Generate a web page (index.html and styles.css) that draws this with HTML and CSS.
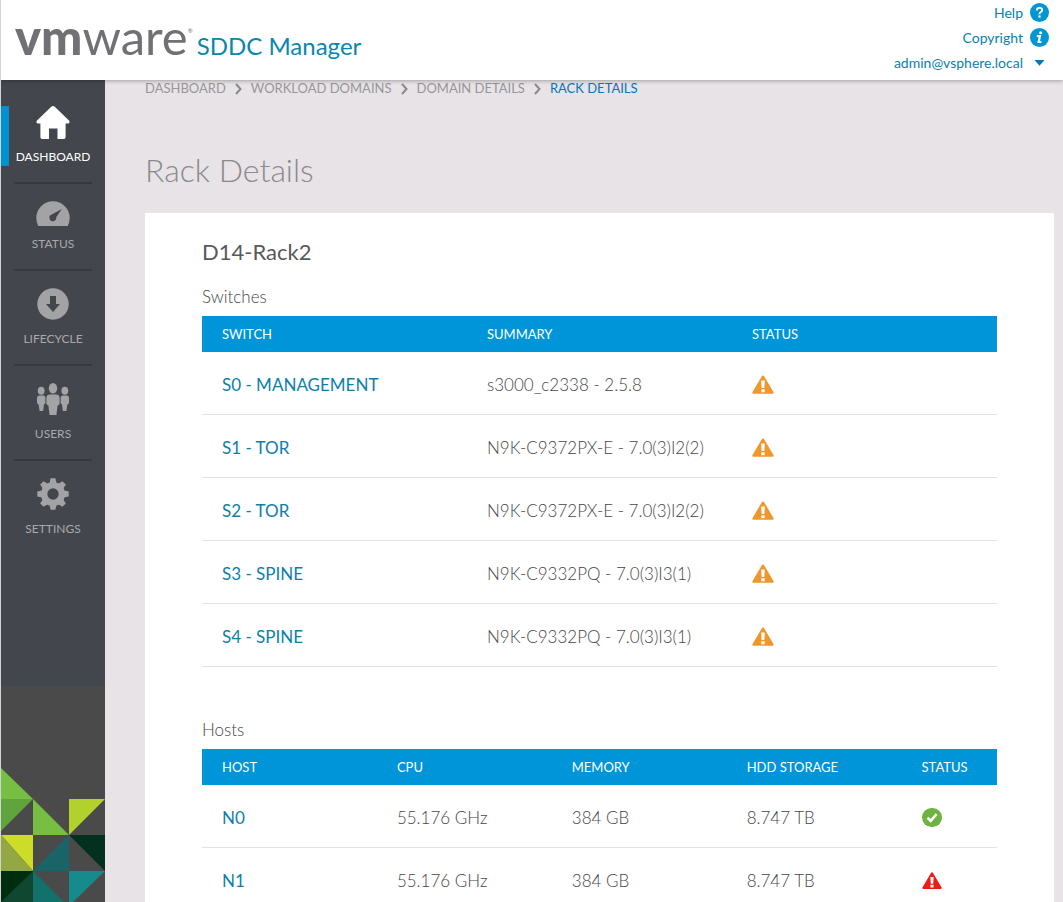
FILE: index.html
```
<!DOCTYPE html>
<html lang="en">
<head>
    <meta charset="UTF-8">
    <meta name="viewport" content="width=device-width, initial-scale=1.0">
    <title>SDDC Manager - Rack Details</title>
    <link rel="stylesheet" href="styles.css">
</head>
<body>
    <!-- shared status icons -->
    <svg class="sprite" aria-hidden="true">
        <symbol id="warning" viewBox="0 0 22 19">
            <path d="M11 0.5 Q11.8 0.5 12.3 1.4 L21.6 17.2 Q22 18.8 20.6 18.8 H1.4 Q0 18.8 0.4 17.2 L9.7 1.4 Q10.2 0.5 11 0.5Z" fill="currentColor"/>
            <path d="M9.2 5.6 H12.8 L12.4 13 H9.6Z M9.3 14.2 H12.7 V17.2 H9.3Z" fill="#fff"/>
        </symbol>
        <symbol id="ok" viewBox="0 0 20 19">
            <rect width="20" height="19" rx="9.5" fill="currentColor"/>
            <path d="M5.5 9.8 L8.7 12.8 L14.6 6.2" fill="none" stroke="#fff" stroke-width="2.6"/>
        </symbol>
    </svg>

    <header class="header">
        <div class="brand">
            <span class="logo"><b>vm</b>ware<sup>®</sup></span>
            <span class="product">SDDC Manager</span>
        </div>
        <div class="user-menu">
            <a href="#">Help
                <svg class="round" viewBox="0 0 19 19"><circle cx="9.5" cy="9.5" r="9.5" fill="#0095d3"/><path d="M6.8 7.4 Q6.8 4.9 9.5 4.9 Q12.2 4.9 12.2 7.1 Q12.2 8.5 10.7 9.2 Q9.5 9.8 9.5 11.2" fill="none" stroke="#fff" stroke-width="1.9"/><rect x="8.4" y="12.4" width="2.2" height="2.2" fill="#fff"/></svg>
            </a>
            <a href="#">Copyright
                <svg class="round" viewBox="0 0 19 19"><circle cx="9.5" cy="9.5" r="9.5" fill="#0095d3"/><path d="M6.8 8 H9.9 L8.6 14 H11.4" fill="none" stroke="#fff" stroke-width="2.2"/><circle cx="10.6" cy="4.8" r="1.5" fill="#fff"/></svg>
            </a>
            <button type="button">admin@vsphere.local
                <svg class="round" viewBox="0 0 19 19"><path d="M4.5 7 H14.5 L9.5 12.8Z" fill="#0079b8"/></svg>
            </button>
        </div>
    </header>

    <div class="page">
        <nav class="sidebar">
            <ul class="menu">
                <li class="active"><a href="#">
                    <svg width="34" height="33" viewBox="0 0 34 33"><path d="M17 0 Q18 0 19 1 L33 14.5 Q34.4 16.6 32.5 17.5 H29.6 V31 Q29.6 33 28 33 H21.5 V22.5 H13 V33 H6 Q4.4 33 4.4 31 V17.5 H1.5 Q-0.4 16.6 1 14.5 L15 1 Q16 0 17 0Z" fill="#fff"/></svg>
                    <span>DASHBOARD</span>
                </a></li>
                <li><a href="#">
                    <svg width="34" height="25" viewBox="0 0 34 25"><path d="M2.2 25 Q0.3 21 0.3 17 A16.7 16.7 0 0 1 33.7 17 Q33.7 21 31.8 25Z" fill="#a3a3a6"/><path d="M25.8 8 L20.2 16.3 A3.4 3.4 0 1 1 15.7 13.6Z" fill="#43464c"/></svg>
                    <span>STATUS</span>
                </a></li>
                <li><a href="#">
                    <svg width="32" height="33" viewBox="0 0 32 33"><circle cx="16" cy="16" r="15.7" fill="#a3a3a6"/><path d="M13 8 H19 V16 H23 L16 24 L9 16 H13Z" fill="#43464c"/></svg>
                    <span>LIFECYCLE</span>
                </a></li>
                <li><a href="#">
                    <svg width="32" height="33" viewBox="0 0 32 33" fill="#a3a3a6">
                        <ellipse cx="16" cy="5.2" rx="4.2" ry="5.2"/><path d="M13 11.4 H19 Q22.6 11.4 22.6 15 V20.5 Q22.6 22 20.6 22.5 L19.4 32 H12.6 L11.4 22.5 Q9.4 22 9.4 20.5 V15 Q9.4 11.4 13 11.4Z"/>
                        <ellipse cx="4.2" cy="7.8" rx="3.4" ry="4"/><path d="M2.5 12.6 H6 Q8.4 12.6 8.4 15 V19.5 Q8.4 21 7 21.5 L6.2 28 H2.6 L1.6 21.5 Q0 21 0 19.5 V15 Q0 12.6 2.5 12.6Z"/>
                        <ellipse cx="27.8" cy="7.8" rx="3.4" ry="4"/><path d="M26 12.6 H29.5 Q32 12.6 32 15 V19.5 Q32 21 30.4 21.5 L29.4 28 H25.8 L25 21.5 Q23.6 21 23.6 19.5 V15 Q23.6 12.6 26 12.6Z"/>
                    </svg>
                    <span>USERS</span>
                </a></li>
                <li><a href="#">
                    <svg width="32" height="33" viewBox="0 0 32 33">
                        <g fill="#a3a3a6"><circle cx="16" cy="16" r="12"/>
                        <path id="tooth" d="M12.6 5 L13.6 0.3 H18.4 L19.4 5 V27 L18.4 31.7 H13.6 L12.6 27Z"/>
                        <use href="#tooth" transform="rotate(45 16 16)"/><use href="#tooth" transform="rotate(90 16 16)"/><use href="#tooth" transform="rotate(135 16 16)"/></g>
                        <circle cx="16" cy="16" r="5.7" fill="#43464c"/>
                    </svg>
                    <span>SETTINGS</span>
                </a></li>
            </ul>
            <svg class="mosaic" viewBox="0 0 104 216" aria-hidden="true">
                <rect width="104" height="216" fill="#4a4a4a"/>
                <path d="M0 82 L32 113 H0Z M32 113 L68 149 H32Z" fill="#76bf43"/>
                <path d="M0 113 H32 L0 145Z" fill="#62a43c"/>
                <path d="M68 113 H104 L68 149Z" fill="#b3d12c"/>
                <path d="M0 149 H32 V185Z" fill="#cddc29"/>
                <path d="M0 149 L32 185 H0Z" fill="#93a843"/>
                <path d="M68 149 V185 H32Z" fill="#1a6467"/>
                <path d="M68 149 H104 V185Z" fill="#04301f"/>
                <path d="M0 185 H32 V216 H0Z" fill="#0f4731"/>
                <path d="M0 185 H32 L0 216Z" fill="#002d10"/>
                <path d="M32 185 L63 216 H32Z" fill="#12716b"/>
                <path d="M68 185 H104 L72 216 H68Z" fill="#168b8c"/>
            </svg>
        </nav>

        <main class="content">
            <nav class="breadcrumb">
                <a href="#">DASHBOARD</a>
                <svg viewBox="0 0 7 12"><path d="M1 1 L5.5 6 L1 11"/></svg>
                <a href="#">WORKLOAD DOMAINS</a>
                <svg viewBox="0 0 7 12"><path d="M1 1 L5.5 6 L1 11"/></svg>
                <a href="#">DOMAIN DETAILS</a>
                <svg viewBox="0 0 7 12"><path d="M1 1 L5.5 6 L1 11"/></svg>
                <a href="#" class="current">RACK DETAILS</a>
            </nav>
            <h1>Rack Details</h1>

            <section class="card">
                <h2>D14-Rack2</h2>

                <h3>Switches</h3>
                <table class="switches">
                    <thead>
                        <tr><th>SWITCH</th><th>SUMMARY</th><th>STATUS</th></tr>
                    </thead>
                    <tbody>
                        <tr><td><a href="#">S0 - MANAGEMENT</a></td><td>s3000_c2338 - 2.5.8</td><td><svg class="status warn"><use href="#warning"/></svg></td></tr>
                        <tr><td><a href="#">S1 - TOR</a></td><td>N9K-C9372PX-E - 7.0(3)I2(2)</td><td><svg class="status warn"><use href="#warning"/></svg></td></tr>
                        <tr><td><a href="#">S2 - TOR</a></td><td>N9K-C9372PX-E - 7.0(3)I2(2)</td><td><svg class="status warn"><use href="#warning"/></svg></td></tr>
                        <tr><td><a href="#">S3 - SPINE</a></td><td>N9K-C9332PQ - 7.0(3)I3(1)</td><td><svg class="status warn"><use href="#warning"/></svg></td></tr>
                        <tr><td><a href="#">S4 - SPINE</a></td><td>N9K-C9332PQ - 7.0(3)I3(1)</td><td><svg class="status warn"><use href="#warning"/></svg></td></tr>
                    </tbody>
                </table>

                <h3>Hosts</h3>
                <table class="hosts">
                    <thead>
                        <tr><th>HOST</th><th>CPU</th><th>MEMORY</th><th>HDD STORAGE</th><th>STATUS</th></tr>
                    </thead>
                    <tbody>
                        <tr><td><a href="#">N0</a></td><td>55.176 GHz</td><td>384 GB</td><td>8.747 TB</td><td><svg class="status ok"><use href="#ok"/></svg></td></tr>
                        <tr><td><a href="#">N1</a></td><td>55.176 GHz</td><td>384 GB</td><td>8.747 TB</td><td><svg class="status error"><use href="#warning"/></svg></td></tr>
                    </tbody>
                </table>
            </section>
        </main>
    </div>
</body>
</html>
```
FILE: styles.css
```
* {
    box-sizing: border-box;
}
body {
    margin: 0;
    height: 100vh;
    display: flex;
    flex-direction: column;
    overflow: hidden;
    border-left: 1px solid #d4d4d6;
    background-color: #e7e3e6;
    font-family: Lato, "Liberation Sans", sans-serif;
    font-size: 17px;
    color: #454648;
}
a {
    color: #0b7fab;
    text-decoration: none;
}
.sprite {
    position: absolute;
    width: 0;
    height: 0;
}

/* Header */
.header {
    position: relative;
    z-index: 1;
    flex: none;
    height: 80px;
    display: flex;
    justify-content: space-between;
    padding: 0 14px;
    background-color: #fff;
    box-shadow: 0 1px 4px rgba(0, 0, 0, 0.3);
}
.brand {
    display: flex;
    align-items: baseline;
    gap: 4px;
}
.logo {
    font-size: 49px;
    line-height: 72px;
    color: #717074;
}
.logo b {
    font-weight: 900;
}
.logo sup {
    font-size: 6px;
    line-height: 6px;
    vertical-align: 22px;
}
.product {
    font-size: 24px;
    color: #0b86ad;
}
.user-menu {
    display: flex;
    flex-direction: column;
    align-items: flex-end;
}
.user-menu a,
.user-menu button {
    display: flex;
    align-items: center;
    gap: 7px;
    height: 25px;
    padding: 0;
    border: none;
    background: none;
    font-family: inherit;
    font-size: 14px;
    color: #0b7fab;
}
.round {
    width: 19px;
    height: 19px;
}

/* Sidebar */
.page {
    flex: 1;
    display: flex;
    min-height: 0;
}
.sidebar {
    flex: none;
    width: 104px;
    display: flex;
    flex-direction: column;
    justify-content: space-between;
    background-color: #43464c;
}
.menu {
    margin: 0;
    padding: 9px 0 0;
    list-style: none;
}
.menu a {
    display: flex;
    flex-direction: column;
    align-items: center;
    gap: 9px;
    margin: 0 13px;
    padding: 17px 0 16px;
    border-bottom: 2px solid #37393e;
    font-size: 12px;
    line-height: 18px;
    color: #a9a9ac;
}
.menu li:last-child a {
    border-bottom: none;
}
.menu .active {
    position: relative;
}
.menu .active a {
    color: #fff;
}
.menu .active::before {
    content: "";
    position: absolute;
    left: 0;
    top: 17px;
    width: 8px;
    height: 60px;
    background-color: #0091d0;
}
.mosaic {
    display: block;
    width: 100%;
}

/* Content */
.content {
    flex: 1;
    display: flex;
    flex-direction: column;
    min-width: 0;
    padding: 0 9px 0 40px;
}
.breadcrumb {
    display: flex;
    align-items: center;
    gap: 9px;
    line-height: 17px;
    font-size: 13px;
}
.breadcrumb a {
    color: #98969a;
}
.breadcrumb .current {
    color: #0079b8;
}
.breadcrumb svg {
    width: 7px;
    height: 12px;
    fill: none;
    stroke: #8b898d;
    stroke-width: 2;
}
h1 {
    margin: 53px 0 23px;
    font-size: 32px;
    line-height: 40px;
    font-weight: 300;
    color: #8b898d;
}
.card {
    flex: 1;
    min-height: 0;
    padding: 23px 57px 0;
    background-color: #fff;
}
h2 {
    margin: 0 0 17px;
    font-size: 22px;
    line-height: 32px;
    font-weight: 400;
    color: #58595b;
}
h3 {
    margin: 0 0 8px;
    font-size: 17px;
    line-height: 23px;
    font-weight: 300;
}
table {
    width: 100%;
    table-layout: fixed;
    border-collapse: separate;
    border-spacing: 0;
}
.switches {
    margin-bottom: 51px;
}
th {
    height: 36px;
    padding: 0 20px;
    background-color: #0095d9;
    font-size: 13px;
    font-weight: 400;
    text-align: left;
    color: #fff;
}
td {
    height: 63px;
    padding: 2px 20px 0;
    border-bottom: 1px solid #e2e2e2;
    font-weight: 300;
}
td a {
    font-weight: 400;
}
.hosts th {
    width: 22%;
}
.hosts th:last-child {
    width: 12%;
}
.status {
    display: block;
    width: 22px;
    height: 19px;
}
.warn {
    color: #f0962a;
}
.ok {
    width: 20px;
    color: #6cb33f;
}
.error {
    width: 20px;
    color: #ee1c17;
}
```
